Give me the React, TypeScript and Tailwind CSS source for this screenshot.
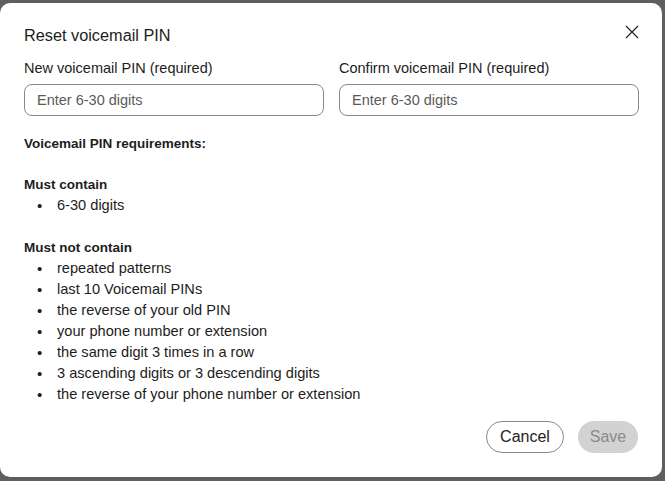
import React from "react";

const mustNot = [
  "repeated patterns",
  "last 10 Voicemail PINs",
  "the reverse of your old PIN",
  "your phone number or extension",
  "the same digit 3 times in a row",
  "3 ascending digits or 3 descending digits",
  "the reverse of your phone number or extension",
];

const Bullet = ({ children }: { children: React.ReactNode }) => (
  <li className="flex items-center h-[21px]">
    <span className="w-[33px] pl-[13px] text-[15px]">•</span>
    <span>{children}</span>
  </li>
);

export default function App() {
  return (
    <div
      className="w-screen h-screen overflow-hidden bg-[#5f5f5f] pt-[3px]"
      style={{ fontFamily: '"Liberation Sans", Arial, sans-serif' }}
    >
      <div className="w-[662px] h-[474px] bg-white rounded-[10px] flex flex-col pl-[24px] pr-[23px] pt-[22px] pb-[24px] text-[#1d1d1d]">
        <div className="flex justify-between items-center h-[20px]">
          <h2 className="text-[16.3px] leading-[20px]">Reset voicemail PIN</h2>
          <button className="w-[14px] h-[14px] mr-[0px] mt-[-6px] text-[#222]" aria-label="Close">
            <svg viewBox="0 0 14 14" width="14" height="14" fill="none" stroke="currentColor" strokeWidth="1.2">
              <path d="M1 1L13 13M13 1L1 13" />
            </svg>
          </button>
        </div>

        <div className="flex gap-[15px] mt-[13px]">
          <label className="w-[300px] flex flex-col">
            <span className="text-[14.5px] leading-[20px]">New voicemail PIN (required)</span>
            <input
              className="mt-[6px] h-[32px] rounded-[8px] border border-[#8a8a8a] px-[12px] text-[14.5px] placeholder:text-[#5a5a5a] outline-none"
              placeholder="Enter 6-30 digits"
            />
          </label>
          <label className="w-[300px] flex flex-col">
            <span className="text-[14.5px] leading-[20px]">Confirm voicemail PIN (required)</span>
            <input
              className="mt-[6px] h-[32px] rounded-[8px] border border-[#8a8a8a] px-[12px] text-[14.5px] placeholder:text-[#5a5a5a] outline-none"
              placeholder="Enter 6-30 digits"
            />
          </label>
        </div>

        <div className="mt-[16.5px] leading-[21px]">
          <p className="text-[13.5px] font-bold">Voicemail PIN requirements:</p>
          <p className="text-[13.5px] font-bold mt-[20px]">Must contain</p>
          <ul className="text-[14.6px]">
            <Bullet>6-30 digits</Bullet>
          </ul>
          <p className="text-[13.5px] font-bold mt-[21px]">Must not contain</p>
          <ul className="text-[14.6px]">
            {mustNot.map((m) => (
              <Bullet key={m}>{m}</Bullet>
            ))}
          </ul>
        </div>

        <div className="mt-auto flex justify-end gap-[14px] pr-[1px]">
          <button className="h-[32px] w-[78px] rounded-full border border-[#8a8a8a] text-[16px] text-[#1d1d1d]">
            Cancel
          </button>
          <button className="h-[32px] w-[60px] rounded-full bg-[#d2d2d2] text-[16px] text-[#8a8a8a]">
            Save
          </button>
        </div>
      </div>
    </div>
  );
}
